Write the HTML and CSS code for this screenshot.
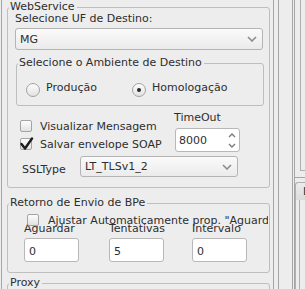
FILE: index.html
```html
<!DOCTYPE html>
<html lang="pt">
<head>
    <meta charset="UTF-8">
    <title>Configurações WebService</title>
    <link rel="stylesheet" href="styles.css">
</head>
<body>
    <div class="window">
        <div class="left">
            <fieldset class="group web">
                <legend>WebService</legend>
                <div class="group-body">
                    <div class="uf-label">Selecione UF de Destino:</div>
                    <div class="combo uf-combo">
                        <span>MG</span>
                        <svg class="chev" width="10" height="6" viewBox="0 0 10 6"><path d="M1 1l4 4 4-4" fill="none" stroke="#8c8c8c" stroke-width="1.6"/></svg>
                    </div>

                    <fieldset class="group amb">
                        <legend>Selecione o Ambiente de Destino</legend>
                        <div class="radios">
                            <label class="radio-item first"><span class="radio"></span><span class="txt">Produção</span></label>
                            <label class="radio-item"><span class="radio on"></span><span class="txt">Homologação</span></label>
                        </div>
                    </fieldset>

                    <div class="opts">
                        <div class="checks">
                            <label class="check-row"><span class="check"></span><span>Visualizar Mensagem</span></label>
                            <label class="check-row">
                                <span class="check">
                                    <svg class="tick" width="14" height="13" viewBox="0 0 14 13"><path d="M1.5 7l3.5 4.5L12 1.5" fill="none" stroke="#1c1c1c" stroke-width="2.4" stroke-linecap="round" stroke-linejoin="round"/></svg>
                                </span>
                                <span>Salvar envelope SOAP</span>
                            </label>
                        </div>
                        <div class="timeout">
                            <div>TimeOut</div>
                            <div class="spin">
                                <span>8000</span>
                                <span class="arrows">
                                    <svg width="8" height="5" viewBox="0 0 8 5"><path d="M1 4l3-3 3 3" fill="none" stroke="#7a7a7a" stroke-width="1.4"/></svg>
                                    <svg width="8" height="5" viewBox="0 0 8 5"><path d="M1 1l3 3 3-3" fill="none" stroke="#7a7a7a" stroke-width="1.4"/></svg>
                                </span>
                            </div>
                        </div>
                    </div>

                    <div class="ssl-row">
                        <span class="ssl-label">SSLType</span>
                        <div class="combo ssl-combo">
                            <span>LT_TLSv1_2</span>
                            <svg class="chev" width="10" height="6" viewBox="0 0 10 6"><path d="M1 1l4 4 4-4" fill="none" stroke="#8c8c8c" stroke-width="1.6"/></svg>
                        </div>
                    </div>
                </div>
            </fieldset>

            <fieldset class="group ret">
                <legend>Retorno de Envio de BPe</legend>
                <div class="group-body">
                    <label class="ajust"><span class="check"></span><span>Ajustar Automaticamente prop. "Aguardar"</span></label>
                    <div class="ret-grid">
                        <div class="col c1">
                            <div>Aguardar</div>
                            <div class="edit">0</div>
                        </div>
                        <div class="col c2">
                            <div>Tentativas</div>
                            <div class="edit">5</div>
                        </div>
                        <div class="col c3">
                            <div>Intervalo</div>
                            <div class="edit">0</div>
                        </div>
                    </div>
                </div>
            </fieldset>

            <fieldset class="group proxy">
                <legend>Proxy</legend>
                <div class="group-body"></div>
            </fieldset>
        </div>

        <div class="splitter"></div>

        <div class="right">
            <div class="top-pane"><div class="top-box"></div></div>
            <div class="tab">L</div>
            <div class="page"><div class="page-box"></div></div>
        </div>
    </div>
</body>
</html>
```

FILE: styles.css
```css
* {
    box-sizing: border-box;
}
html, body {
    margin: 0;
    height: 100%;
}
body {
    background: #ededed;
    font-family: "DejaVu Sans", sans-serif;
    font-size: 11px;
    line-height: 13px;
    color: #2e2e2e;
    overflow: hidden;
}
.window {
    display: flex;
    height: 289px;
}
.left {
    margin-left: 1px;
    width: 273px;
    flex: none;
    border-left: 1px solid #a6a6a6;
    border-right: 1px solid #a6a6a6;
    padding: 0 3px 0 5px;
}
.group {
    margin: 0;
    padding: 0;
    min-width: 0;
    border: 1px solid #bebebe;
    border-radius: 3px;
}
.group legend {
    margin-left: 1px;
    padding: 0 2px 2px 1px;
    white-space: nowrap;
}
.group-body {
    padding: 0 6px 10px 7px;
}
.uf-label {
    margin-top: -3px;
}
.combo {
    display: flex;
    align-items: center;
    justify-content: space-between;
    border: 1px solid #b4b4b4;
    border-radius: 3px;
    background: linear-gradient(#fafafa, #ebebeb);
    padding: 0 5px 0 4px;
}
.uf-combo {
    margin-top: 3px;
    height: 22px;
}
.amb {
    margin: 6px 0 0 1px;
    width: 248px;
}
.radios {
    display: flex;
    margin: 12px 0 0 9px;
    padding-bottom: 8px;
}
.radio-item {
    display: flex;
    align-items: flex-start;
    height: 14px;
}
.radio-item.first {
    width: 106px;
}
.radio-item .txt {
    margin: -2px 0 0 6px;
}
.radio {
    width: 14px;
    height: 14px;
    border: 1px solid #a2a2a2;
    border-radius: 50%;
    background: linear-gradient(#fdfdfd, #e2e2e2);
    display: flex;
    align-items: center;
    justify-content: center;
}
.radio.on::after {
    content: "";
    width: 4px;
    height: 4px;
    border-radius: 50%;
    background: #2a2a2a;
}
.opts {
    display: flex;
    margin-top: 5px;
}
.checks {
    width: 159px;
    padding: 6px 0 0 5px;
}
.check-row {
    display: flex;
    align-items: center;
    height: 18px;
    gap: 8px;
}
.check {
    position: relative;
    flex: none;
    width: 12px;
    height: 12px;
    border: 1px solid #a4a4a4;
    border-radius: 2px;
    background: linear-gradient(#fdfdfd, #e2e2e2);
}
.tick {
    position: absolute;
    left: -1px;
    top: -2px;
}
.spin {
    margin: 4px 0 0 1px;
    width: 65px;
    height: 24px;
    background: #fff;
    border: 1px solid #b8b8b8;
    border-radius: 3px;
    display: flex;
    align-items: center;
    justify-content: space-between;
    padding: 0 3px 0 3px;
}
.arrows {
    display: flex;
    flex-direction: column;
    gap: 5px;
}
.ssl-row {
    display: flex;
    align-items: flex-start;
    margin-top: 3px;
}
.ssl-label {
    width: 65px;
    padding-left: 7px;
    margin-top: 7px;
}
.ssl-combo {
    width: 158px;
    height: 21px;
}
.ret {
    margin-top: 8px;
}
.ajust {
    display: flex;
    align-items: flex-start;
    margin: 3px 0 0 12px;
    height: 8px;
    gap: 9px;
    white-space: nowrap;
    overflow-x: clip;
    width: 241px;
}
.ret-grid {
    display: flex;
    margin-left: 9px;
}
.col {
    width: 55px;
}
.c2 {
    margin-left: 30px;
}
.c3 {
    margin-left: 28px;
}
.edit {
    margin-top: 3px;
    height: 24px;
    background: #fff;
    border: 1px solid #b8b8b8;
    border-radius: 3px;
    padding: 6px 0 0 4px;
}
.proxy {
    margin-top: 3px;
}
.proxy .group-body {
    height: 40px;
}
.splitter {
    flex: none;
    margin-left: 4px;
    width: 15px;
    border-left: 1px solid #a6a6a6;
    border-right: 1px solid #a6a6a6;
}
.right {
    flex: 1;
    margin-left: 1px;
    border-left: 1px solid #a6a6a6;
    min-width: 0;
}
.top-pane {
    height: 178px;
    border-bottom: 1px solid #a6a6a6;
}
.top-box {
    margin-left: 5px;
    height: 171px;
    border-left: 1px solid #b0b0b0;
    border-bottom: 1px solid #b0b0b0;
}
.tab {
    margin-top: 4px;
    height: 18px;
    border: 1px solid #b0b0b0;
    border-right: none;
    border-bottom: none;
    border-radius: 3px 0 0 0;
    background: linear-gradient(#ececec, #dcdcdc);
    padding: 2px 0 0 7px;
    white-space: nowrap;
    overflow: hidden;
}
.page {
    height: 100px;
    border-left: 1px solid #b0b0b0;
    margin-left: 0;
}
.page-box {
    margin-left: 3px;
    height: 100%;
    border-left: 1px solid #b0b0b0;
}
```
